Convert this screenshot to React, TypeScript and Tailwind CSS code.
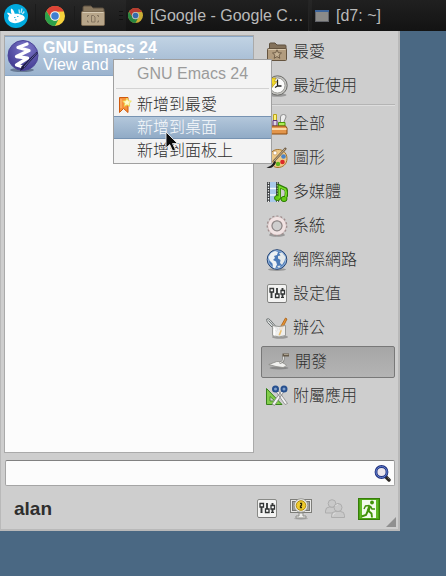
import React from 'react';
import clsx from 'clsx';

type IconProps = { className?: string };

const MouseLogo: React.FC<IconProps> = ({ className }) => (
  <svg viewBox="0 0 24 24" className={className} aria-hidden="true">
    <circle cx="12" cy="12" r="12" fill="#00aade" />
    <path
      d="M3 8.800c1.600-.2 3.300.4 4.600 1.500C6.800 8 6.500 5.800 7.300 4.600c1.700.8 2.900 3 3.400 5.200 2.800-.4 5.800.2 8 1.400 1.500.8 2.300 2 2 3.300-.5 1.700-2.500 2.700-4.700 3.500-2.200 1.200-5.500 1.600-8.300.6-2.300-.9-3.600-2.600-3.500-4.600 0-.9.400-1.700 1-2.300C4.200 10.900 3.300 10 3 8.800z"
      fill="#fff"
    />
    <path d="M15.500 9.500L15 5.500M17 9l1-4.500M18.300 10l2-2.500" stroke="#bdeaf8" strokeWidth="1.300" />
    <path d="M10 13.500h1.500M13 12.500h1.500M11 15.500l1.500.8" fill="none" stroke="#45bfe4" strokeWidth="1.200" />
  </svg>
);

const ChromeLogo: React.FC<IconProps> = ({ className }) => (
  <svg viewBox="0 0 24 24" className={className} aria-hidden="true">
    <circle cx="12" cy="12" r="12" fill="#f7d23c" />
    <path d="M1.600 6A12 12 0 0 1 22.400 6L12 6.600A5.500 5.500 0 0 0 7.200 14.700z" fill="#dd4437" />
    <path d="M1.600 6A12 12 0 0 0 12 24l4.800-9.300A5.500 5.500 0 0 1 7.200 14.700z" fill="#2da14b" />
    <path d="M2.500 5A12 12 0 0 1 22.400 6.500H12z" fill="#dd4437" />
    <circle cx="12" cy="12" r="5.800" fill="#f4f4f4" />
    <circle cx="12" cy="12" r="4.500" fill="#3e7fd0" />
  </svg>
);

const FileManagerIcon: React.FC<IconProps> = ({ className }) => (
  <svg viewBox="0 0 24 22" className={className} aria-hidden="true">
    <path d="M2 12V2.500Q2 1 3.500 1H10l2 2h9.500Q23 3 23 4.500V12z" fill="#8a7960" stroke="#5d5040" />
    <rect x=".5" y="6.500" width="23" height="14" rx="1.200" fill="#b8a68a" stroke="#7d6c54" />
    <path d="M1.500 7.500h21" stroke="#d8cbb4" />
    <path
      d="M6.500 12v-1.500H8M6.500 15.500V17H8M17.500 12v-1.500H16M17.500 15.500V17H16M10.500 10.500h2l1.500 1.500v5h-3.500z"
      fill="none"
      stroke="#857560"
    />
  </svg>
);

const TerminalWindowIcon: React.FC<IconProps> = ({ className }) => (
  <svg viewBox="0 0 14 12" className={className} aria-hidden="true">
    <rect x=".5" y=".5" width="13" height="11" fill="#8b8b89" stroke="#62646a" />
    <path d="M0 1h14" stroke="#3d659b" strokeWidth="2" />
  </svg>
);

const EmacsIcon: React.FC<IconProps> = ({ className }) => (
  <svg viewBox="0 0 32 32" className={className} aria-hidden="true">
    <defs>
      <radialGradient id="emacs" cx="60%" cy="25%" r="75%">
        <stop offset="0" stopColor="#7f7acb" />
        <stop offset="1" stopColor="#423b92" />
      </radialGradient>
    </defs>
    <ellipse cx="15" cy="30" rx="12" ry="2" fill="#42506a" opacity=".6" />
    <circle cx="16" cy="15.500" r="15" fill="url(#emacs)" stroke="#4c4699" />
    <path
      d="M20 4L11 7.500l11 3L9.500 16.500l11 1.700L9.500 25l6.500 2"
      fill="none"
      stroke="#fff"
      strokeWidth="3.300"
      strokeLinecap="round"
      strokeLinejoin="round"
    />
    <path d="M31 13L17 28.500l-4 2.500 1.500-4.500L29.500 12z" fill="#1c1943" />
    <path d="M29.500 13L17 27" stroke="#6f73bd" strokeWidth=".8" />
  </svg>
);

const FavoritesIcon: React.FC<IconProps> = ({ className }) => (
  <svg viewBox="0 0 22 22" className={className} aria-hidden="true">
    <path d="M3.500 11V3Q3.500 2 4.500 2H9l2 2h8q1 0 1 1v6z" fill="#83715a" stroke="#5f503e" />
    <rect x="1.500" y="7.500" width="19" height="12" rx="1" fill="#b29c7e" stroke="#65543f" />
    <path d="M2.500 8.500h17" stroke="#d7c6ab" />
    <path
      d="M11 8.800l1.300 2.900 3.200.3-2.400 2.100.7 3.200-2.800-1.700-2.800 1.700.7-3.200L6.500 12l3.200-.3z"
      fill="#c4b092"
      stroke="#6a5843"
      strokeWidth=".9"
    />
  </svg>
);

const RecentIcon: React.FC<IconProps> = ({ className }) => (
  <svg viewBox="0 0 22 22" className={className} aria-hidden="true">
    <ellipse cx="11.500" cy="20" rx="9" ry="1.800" fill="#777" opacity=".6" />
    <circle cx="11.500" cy="10.500" r="9.700" fill="#c6c6c2" stroke="#6b6b68" />
    <circle cx="11.500" cy="10.500" r="7.500" fill="#fbfbfa" stroke="#8b8b88" strokeWidth=".8" />
    <path d="M11.500 4.500v6.500h4M11.500 11l-2.500 1.500" fill="none" stroke="#222" strokeWidth="1.300" />
    <path d="M3 3h7L8.500 6.500H11L5.500 13l1-4H3z" fill="#f1d929" stroke="#a98a0b" strokeWidth=".6" />
  </svg>
);

const AllIcon: React.FC<IconProps> = ({ className }) => (
  <svg viewBox="0 0 22 22" className={className} aria-hidden="true">
    <path d="M7.500 1.500h3v7h-3z" fill="#fff27a" stroke="#baa51c" />
    <path d="M3.500 5h2v7h-2z" fill="#e4e4e4" stroke="#888" />
    <path d="M7 7.500h4V13H7z" fill="#ddd5e8" stroke="#5e3474" />
    <path d="M14.500 4q0-2.500 3-2.500t2.500 2.500l-2.500 6h-3z" fill="#eee" stroke="#8c8c8c" />
    <path d="M12.500 9.500h6.500V13h-6.500z" fill="#a9ee58" stroke="#4c9a06" />
    <path d="M1.500 15L3 13h16.500l1.500 2v6h-19.500z" fill="#e2954b" stroke="#8a4b10" />
    <path d="M2 16h18.500" stroke="#fbd9a4" strokeWidth="2" />
  </svg>
);

const GraphicsIcon: React.FC<IconProps> = ({ className }) => (
  <svg viewBox="0 0 22 22" className={className} aria-hidden="true">
    <path
      d="M9 3c6-2 12 2 12 8.500C21 17 17 20.500 12 20.500c-3 0-5-1-4.500-3 .4-1.800-.5-3-2.500-3.500C2 13 3 5 9 3z"
      fill="#eec987"
      stroke="#a5732b"
    />
    <circle cx="9" cy="6" r="2" fill="#fff" stroke="#c2955a" strokeWidth=".7" />
    <circle cx="17.500" cy="9.500" r="2.300" fill="#4a83c7" />
    <circle cx="16.500" cy="15" r="2.300" fill="#dc2929" />
    <circle cx="12" cy="17" r="2.200" fill="#63b51d" />
    <path d="M20 1L7.500 14.500" stroke="#74614a" strokeWidth="2.400" />
    <path d="M19 2L8 14" stroke="#d7c5a0" strokeWidth=".8" />
    <path d="M9 14c-2 1-2 5-8.500 6.500 1 .8 5 .5 6-.5 2-1.500 3-3 3.500-5z" fill="#1f1f1f" />
  </svg>
);

const MultimediaIcon: React.FC<IconProps> = ({ className }) => (
  <svg viewBox="0 0 22 22" className={className} aria-hidden="true">
    <path d="M1 1h12v20H1z" fill="#3d4043" />
    <path d="M4 1h6v20H4z" fill="#a9c9ea" />
    <path d="M4 7.500h6M4 14h6" stroke="#f3f8fd" strokeWidth="1.600" />
    <path d="M2.500 1.500V21M11.500 1.500V21" stroke="#fff" strokeWidth="1.300" strokeDasharray="1.300 1.300" />
    <path d="M13.200 17V5l6.500 3q1.500 3 .2 8" fill="none" stroke="#2c7c05" strokeWidth="3.600" />
    <ellipse cx="11.500" cy="17" rx="3" ry="2.600" fill="#64cc17" stroke="#2c7c05" />
    <ellipse cx="18" cy="18" rx="3" ry="2.600" fill="#64cc17" stroke="#2c7c05" />
    <path d="M13.400 17V5.500l6.100 2.900q1.300 3 .2 8" fill="none" stroke="#79db27" strokeWidth="1.700" />
  </svg>
);

const SystemIcon: React.FC<IconProps> = ({ className }) => (
  <svg viewBox="0 0 22 22" className={className} aria-hidden="true">
    <ellipse cx="11" cy="20" rx="8" ry="1.700" fill="#999" />
    <circle cx="11" cy="10.800" r="9.300" fill="none" stroke="#a08f8f" strokeWidth="2.200" strokeDasharray="1.950 1.950" />
    <circle cx="11" cy="10.800" r="7" fill="none" stroke="#bda9a9" strokeWidth="4.600" />
    <circle cx="11" cy="10.800" r="7.200" fill="none" stroke="#f1e3e3" strokeWidth="3.600" />
    <circle cx="11" cy="10.800" r="5" fill="#cecece" stroke="#8f8888" strokeWidth="1.200" />
  </svg>
);

const NetworkIcon: React.FC<IconProps> = ({ className }) => (
  <svg viewBox="0 0 22 22" className={className} aria-hidden="true">
    <ellipse cx="11" cy="20.500" rx="9" ry="1.400" fill="#999" />
    <circle cx="11" cy="10.500" r="9.800" fill="#4c7bb8" stroke="#234373" />
    <circle cx="11" cy="10.500" r="8.800" fill="none" stroke="#a9c5e6" strokeWidth=".8" />
    <path
      d="M5 4l4-2 3 1-1 3-3 1 1 2-2 2 3 1.500 1 3-2 4-2-1-.5-4-3-3L2.500 8z"
      fill="#eef2f4"
    />
    <path d="M13 4l3-.5L19.500 8l-1 4-2.500 4-2-2 .5-3-2.500-1.500L12 7l2.500-.5z" fill="#e4e9ea" />
    <path d="M11 17l4-.5-2 2.500z" fill="#dfe5e8" />
  </svg>
);

const SettingsIcon: React.FC<IconProps> = ({ className }) => (
  <svg viewBox="0 0 22 22" className={className} aria-hidden="true">
    <rect x="1.500" y="1.500" width="19" height="18" rx="1.500" fill="#f3f3f2" stroke="#898a87" />
    <path d="M2.500 19.500h17" stroke="#777" />
    <path d="M5.500 5v9M11 5v9M16.500 5v9" stroke="#3a3d3d" strokeWidth="1.900" />
    <path d="M4 5.500h3.500V9H4zM9.500 11H13v3.500H9.500zM15 7.500h3.500V11H15z" fill="#fff" stroke="#303333" strokeWidth="1.300" />
    <path d="M4.500 14.500h2M15 14.500h3" stroke="#303333" strokeWidth="1.200" />
  </svg>
);

const OfficeIcon: React.FC<IconProps> = ({ className }) => (
  <svg viewBox="0 0 22 22" className={className} aria-hidden="true">
    <ellipse cx="14" cy="20" rx="8" ry="1.700" fill="#999" />
    <path d="M.8 2q2-1 3.500 1l7.700 9-1.500 2.500-9-9Q.300 3.500.8 2z" fill="#d9dddd" stroke="#707575" />
    <path d="M2.500 3.500l7.500 8" stroke="#707575" />
    <path d="M19.500 1l1.500 1-5.500 11-2.500-.5z" fill="#e99635" stroke="#a55b10" strokeWidth=".8" />
    <path d="M6.500 8.500q6.500 2 13 0v10q-6.500 3-13 0z" fill="#f5f5f3" fillOpacity=".85" stroke="#999a97" />
    <path d="M12.500 18l2-5 1.500.5-2 5z" fill="#ecc16f" />
    <path d="M8.500 10.500v8" stroke="#fff" strokeWidth="1.500" />
  </svg>
);

const DevelopmentIcon: React.FC<IconProps> = ({ className }) => (
  <svg viewBox="0 0 22 22" className={className} aria-hidden="true">
    <ellipse cx="11" cy="17" rx="9.500" ry="1.500" fill="#888" />
    <path d="M.8 13.500l8-3 4 .2 5.700 3.300q-1 2-3.500 2.500L8 15.500z" fill="#f1f1ef" stroke="#8a8a87" strokeWidth=".8" />
    <path d="M11.500 12q4-1 4-4V4.500" fill="none" stroke="#83837f" strokeWidth="2.200" />
    <path d="M11.500 12q4-1 4-4V4.500" fill="none" stroke="#dededb" />
    <path d="M14.500 4H21" stroke="#655a4a" strokeWidth="3" />
    <path d="M16 3.500h4.500" stroke="#aaa08e" />
  </svg>
);

const AccessoriesIcon: React.FC<IconProps> = ({ className }) => (
  <svg viewBox="0 0 22 22" className={className} aria-hidden="true">
    <path d="M.5 3.500v16H16z" fill="#82cd4b" stroke="#37801b" />
    <path d="M4 11.500V16h5z" fill="#cecece" stroke="#37801b" strokeWidth=".8" />
    <path d="M10 6.500l9 13 2.500-1-8.500-12zM18 6.500l-9.500 14-2.500-1.500 9-12.500z" fill="#f2f2f2" stroke="#858585" strokeWidth=".8" />
    <circle cx="9.500" cy="4" r="2.500" fill="#7f9fcb" stroke="#27508f" strokeWidth="2" />
    <circle cx="18" cy="4" r="2.500" fill="#7f9fcb" stroke="#27508f" strokeWidth="2" />
  </svg>
);

const BookmarkIcon: React.FC<IconProps> = ({ className }) => (
  <svg viewBox="0 0 16 16" className={className} aria-hidden="true">
    <path d="M2.500.500h8.500v15l-4.500-4-4 4z" fill="#f6903a" stroke="#cf5a0d" />
    <path d="M4 2v9" stroke="#ffc17e" />
    <path
      d="M10 1l1.300 2.800 3 .4-2.200 2.100.6 3-2.700-1.500-2.700 1.500.6-3-2.200-2.100 3-.4z"
      fill="#fffbd0"
      stroke="#eedc4e"
      strokeWidth=".9"
    />
  </svg>
);

const SearchIcon: React.FC<IconProps> = ({ className }) => (
  <svg viewBox="0 0 17 17" className={className} aria-hidden="true">
    <path d="M11 11l4 4" stroke="#27231f" strokeWidth="3.400" strokeLinecap="round" />
    <path d="M13.500 12.500l2 2" stroke="#8b8378" strokeWidth=".8" />
    <circle cx="7.500" cy="7" r="5.500" fill="#ece7ee" stroke="#243480" strokeWidth="2.800" />
    <circle cx="7.500" cy="7" r="5.500" fill="none" stroke="#5f7fd0" strokeWidth="1" />
  </svg>
);

const LockScreenIcon: React.FC<IconProps> = ({ className }) => (
  <svg viewBox="0 0 22 22" className={className} aria-hidden="true">
    <ellipse cx="11" cy="20.500" rx="7" ry="1.200" fill="#aaa" />
    <rect x=".5" y="1.500" width="21" height="13" fill="#e8e8e6" stroke="#7d7d79" />
    <rect x="2.500" y="3.500" width="17" height="9" fill="#9f9f9b" stroke="#767672" />
    <path d="M9 15h4v3h3v2H6v-2h3z" fill="#ededeb" stroke="#8f8f8b" />
    <circle cx="11" cy="7.500" r="6.800" fill="#eaeae4" stroke="#8f8f8b" strokeWidth=".8" />
    <circle cx="11" cy="7.500" r="4.800" fill="#eecb2e" stroke="#b08c10" />
    <path d="M10 5.300h1.500v1.900L10.500 8v1.500H12" fill="none" stroke="#2f2807" strokeWidth="1.300" />
  </svg>
);

const SwitchUserIcon: React.FC<IconProps> = ({ className }) => (
  <svg viewBox="0 0 22 22" className={className} aria-hidden="true">
    <g fill="#c9c9c9" stroke="#adadad">
      <path d="M1.500 15v-2q0-4 4-4h5q3 0 3 4v2z" />
      <circle cx="8" cy="5.500" r="3.800" />
      <path d="M7.500 19.500v-2q0-4 4-4h5q4 0 4 4v2z" />
      <circle cx="14" cy="9.500" r="4" />
    </g>
    <path d="M9 17.500q0-2.500 2.500-2.500M11.500 8q1-1.500 2.500-1.500" fill="none" stroke="#dedede" />
  </svg>
);

const LogOutIcon: React.FC<IconProps> = ({ className }) => (
  <svg viewBox="0 0 22 22" className={className} aria-hidden="true">
    <rect x=".5" y=".5" width="21" height="21" fill="#4ca514" stroke="#377d0a" />
    <path d="M4 2h14v18H4z" fill="#f3fbed" />
    <path d="M2 2h2v18H2zM18 2h2v18h-2z" fill="#62b927" />
    <circle cx="14" cy="4.500" r="1.900" fill="#419209" />
    <path d="M12 7.500L10 13" fill="none" stroke="#419209" strokeWidth="2.800" />
    <path d="M11.500 7.500L7.500 8l-1.500 3M12.500 8.500l1.500 2.500h3" fill="none" stroke="#419209" strokeWidth="1.500" />
    <path d="M10 12.500l3.500 3 .5 4M10 12.500l-2 4.500-4.500 1.500" fill="none" stroke="#419209" strokeWidth="1.900" />
  </svg>
);

const Pointer: React.FC<IconProps> = ({ className }) => (
  <svg viewBox="0 0 14 22" className={className} aria-hidden="true">
    <path d="M1 1v16l3.700-3.500 3 6.500 2.800-1.300-3-6.200h5z" fill="#0b0b0b" stroke="#e9e9e9" strokeWidth=".9" />
  </svg>
);

const pinned = [
  { label: '最愛', Icon: FavoritesIcon },
  { label: '最近使用', Icon: RecentIcon },
];

const categories = [
  { label: '全部', Icon: AllIcon },
  { label: '圖形', Icon: GraphicsIcon },
  { label: '多媒體', Icon: MultimediaIcon },
  { label: '系統', Icon: SystemIcon },
  { label: '網際網路', Icon: NetworkIcon },
  { label: '設定值', Icon: SettingsIcon },
  { label: '辦公', Icon: OfficeIcon },
  { label: '開發', Icon: DevelopmentIcon },
  { label: '附屬應用', Icon: AccessoriesIcon },
];

const actions = [
  { label: '設定值', Icon: SettingsIcon },
  { label: '鎖定畫面', Icon: LockScreenIcon },
  { label: '切換使用者', Icon: SwitchUserIcon },
  { label: '登出', Icon: LogOutIcon },
];

type CategoryButtonProps = {
  label: string;
  Icon: React.FC<IconProps>;
  active?: boolean;
};

const CategoryButton: React.FC<CategoryButtonProps> = ({ label, Icon, active }) => (
  <button
    type="button"
    aria-pressed={active}
    className={clsx(
      'flex h-8 w-full items-center gap-[5px] rounded-xs border text-left',
      active ? 'border-[#787878] bg-linear-to-b from-[#a6a6a6] to-[#b4b4b4] px-1.5' : 'border-transparent px-1'
    )}
  >
    <Icon className="size-[22px] shrink-0" />
    <span>{label}</span>
  </button>
);

const Taskbar: React.FC = () => (
  <header className="flex h-[31px] items-center bg-linear-to-b from-[#272727] to-[#191919] text-[#b9b9b9]">
    <button type="button" aria-label="應用程式" className="flex w-9 justify-center border-r border-[#1b1b1b] pr-1">
      <MouseLogo className="size-6" />
    </button>
    <button type="button" aria-label="Google Chrome" className="flex w-[39px] justify-center border-r border-[#1b1b1b]">
      <ChromeLogo className="size-5" />
    </button>
    <button type="button" aria-label="檔案管理員" className="flex w-9 justify-center">
      <FileManagerIcon className="h-[22px] w-6" />
    </button>
    <span className="ml-2 flex w-[7px] flex-col gap-[3px]">
      <span className="h-px w-1 bg-[#111]" />
      <span className="h-px w-1 bg-[#111]" />
      <span className="h-px w-1 bg-[#111]" />
    </span>
    <button type="button" className="flex h-full w-[183px] items-center gap-[7px] border-r border-[#242424] bg-linear-to-b from-[#202020] to-[#131313] pl-0.5">
      <ChromeLogo className="size-[15px] opacity-80" />
      <span>[Google - Google C…</span>
    </button>
    <button type="button" className="ml-[3px] flex h-full flex-1 items-center gap-[7px] bg-linear-to-b from-[#202020] to-[#131313] pl-[3px]">
      <TerminalWindowIcon className="h-3 w-3.5" />
      <span>[d7: ~]</span>
    </button>
  </header>
);

const ContextMenu: React.FC = () => (
  <div
    role="menu"
    className="absolute top-[23px] left-[108px] z-10 w-[159px] border border-[#a0a0a0] bg-[#f3f3f3] pb-px leading-[23px]"
  >
    <div className="mx-0.5 mb-[3px] border-b border-[#d2d2d2] pt-0.5 pb-[3px] pl-[21px] text-[#9b9b9b]">GNU Emacs 24</div>
    <button type="button" role="menuitem" className="flex w-full items-center gap-1 pt-px pl-[3px]">
      <BookmarkIcon className="size-4" />
      <span>新增到最愛</span>
    </button>
    <button
      type="button"
      role="menuitem"
      className="relative flex w-full border-y border-[#7793b2] bg-linear-to-b from-[#b3c7db] to-[#91abc6] pl-[23px] leading-[21px] text-[#f8fafc]"
    >
      <span>新增到桌面</span>
      <Pointer className="absolute top-3.5 left-[51px] z-10 h-[22px] w-3.5" />
    </button>
    <button type="button" role="menuitem" className="flex w-full pl-[23px]">
      <span>新增到面板上</span>
    </button>
  </div>
);

const AppMenu: React.FC = () => (
  <main className="relative flex w-full max-w-[400px] flex-col border-r-2 border-b-2 border-l border-[#b9b9b9] bg-[#cecece] pt-1 pr-[3px] pl-[3px]">
    <div className="flex gap-[7px]">
      <div className="relative min-h-[418px] flex-1 border border-[#aaaaaa] bg-[#fcfcfc]">
        <button
          type="button"
          className="flex h-10 w-full items-center gap-1 border-y border-[#8ba7c6] bg-linear-to-b from-[#c1d3e4] to-[#9bb3ce] pl-0.5 text-left leading-[17px] text-white"
        >
          <EmacsIcon className="size-8 shrink-0" />
          <span>
            <strong className="block font-bold">GNU Emacs 24</strong>
            <span className="block">View and edit files</span>
          </span>
        </button>
        <ContextMenu />
      </div>
      <nav className="flex w-[134px] flex-col gap-0.5 pt-px">
        {pinned.map((item) => (
          <CategoryButton key={item.label} {...item} />
        ))}
        <hr className="border-t border-b border-t-[#b4b4b4] border-b-[#dedede]" />
        {categories.map((item) => (
          <CategoryButton key={item.label} {...item} active={item.label === '開發'} />
        ))}
      </nav>
    </div>

    <label className="mt-[7px] ml-px flex h-[26px] items-center rounded-xs border border-[#a5a5a5] border-t-[#818181] bg-[#fcfcfc] pr-[3px]">
      <input type="text" aria-label="搜尋" className="min-w-0 flex-1 px-1 outline-none" />
      <SearchIcon className="size-[17px]" />
    </label>

    <footer className="flex h-[43px] items-center justify-between pr-[15px] pb-px pl-2.5">
      <span className="pt-1 text-[19px] font-bold">alan</span>
      <div className="flex gap-3 pt-1">
        {actions.map(({ label, Icon }) => (
          <button key={label} type="button" aria-label={label}>
            <Icon className="size-[22px]" />
          </button>
        ))}
      </div>
    </footer>
    <svg viewBox="0 0 10 10" className="absolute right-0.5 bottom-0.5 size-2.5" aria-hidden="true">
      <path d="M10 0v10H0z" fill="#909090" />
    </svg>
  </main>
);

const App: React.FC = () => {
  return (
    <div className="min-h-screen bg-[#4a6883] font-['Liberation_Sans','Noto_Sans_CJK_TC',sans-serif] text-base font-light text-[#2e2e2e]">
      <Taskbar />
      <AppMenu />
    </div>
  );
};

export default App;
